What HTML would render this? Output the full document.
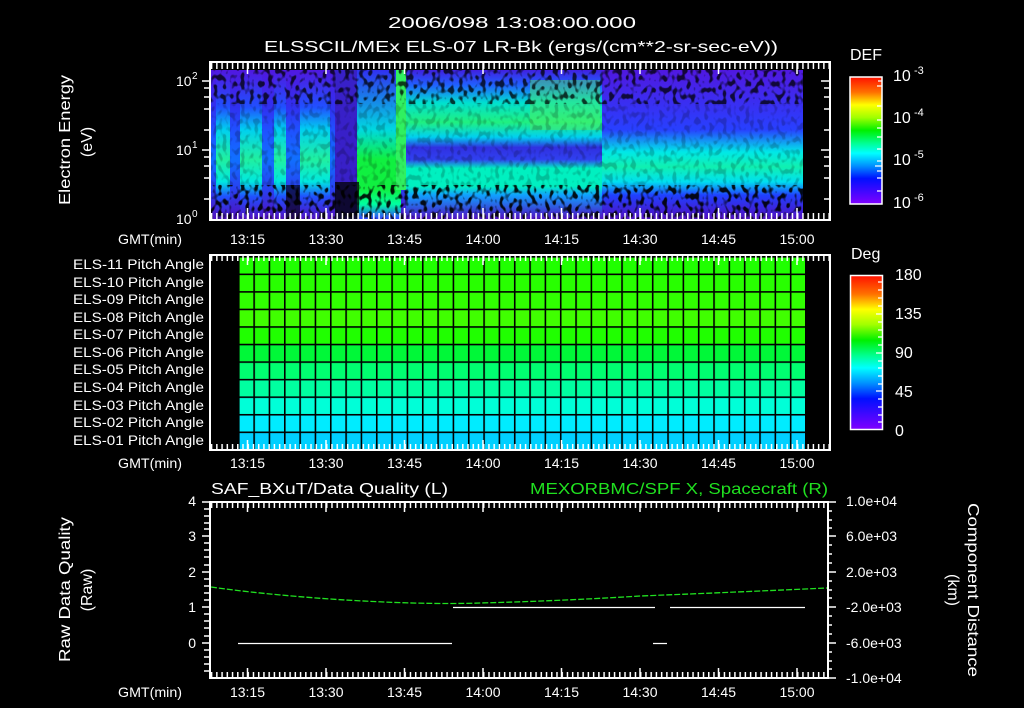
<!DOCTYPE html>
<html><head><meta charset="utf-8"><style>
html,body{margin:0;padding:0;background:#000;}
svg{display:block}
text{font-family:"Liberation Sans",sans-serif;fill:#fff;font-size:14px}
.s{font-size:13px}
</style></head><body>
<svg width="1024" height="708" viewBox="0 0 1024 708" xmlns="http://www.w3.org/2000/svg">
<defs>
<linearGradient id="cb" x1="0" y1="0" x2="0" y2="1">
<stop offset="0" stop-color="#ff1000"/><stop offset=".12" stop-color="#ff7000"/><stop offset=".22" stop-color="#ffff00"/><stop offset=".32" stop-color="#a0ff00"/><stop offset=".42" stop-color="#00f000"/><stop offset=".52" stop-color="#00ff90"/><stop offset=".6" stop-color="#00ffff"/><stop offset=".7" stop-color="#0090ff"/><stop offset=".8" stop-color="#0010ff"/><stop offset="1" stop-color="#8000ff"/>
</linearGradient>
<linearGradient id="bg" x1="0" y1="0" x2="0" y2="1">
<stop offset="0" stop-color="#5018e0"/><stop offset=".25" stop-color="#3030f0"/><stop offset=".4" stop-color="#2050ff"/><stop offset=".6" stop-color="#1070ff"/><stop offset=".8" stop-color="#2840f0"/><stop offset="1" stop-color="#5010c0"/>
</linearGradient>
<linearGradient id="st" x1="0" y1="0" x2="0" y2="1">
<stop offset="0" stop-color="#5018e0"/><stop offset=".25" stop-color="#2050ff"/><stop offset=".4" stop-color="#00d0f0"/><stop offset=".6" stop-color="#20f0a0"/><stop offset=".75" stop-color="#00e8e0"/><stop offset=".85" stop-color="#2050ff"/><stop offset="1" stop-color="#5010c0"/>
</linearGradient>
<linearGradient id="g45" x1="0" y1="0" x2="0" y2="1">
<stop offset="0" stop-color="#3030f0"/><stop offset=".4" stop-color="#00d8e0"/><stop offset=".6" stop-color="#10f040"/><stop offset=".8" stop-color="#10f040"/><stop offset=".9" stop-color="#00ffa0"/><stop offset="1" stop-color="#3040ff"/>
</linearGradient>
<linearGradient id="mid" x1="0" y1="0" x2="0" y2="1">
<stop offset="0" stop-color="#4020e0"/><stop offset=".1" stop-color="#2060ff"/><stop offset=".22" stop-color="#00e0d0"/><stop offset=".35" stop-color="#20f080"/><stop offset=".45" stop-color="#00d0f0"/><stop offset=".52" stop-color="#3030e0"/><stop offset=".6" stop-color="#3040f0"/><stop offset=".66" stop-color="#00f0c0"/><stop offset=".78" stop-color="#00f0c0"/><stop offset=".84" stop-color="#10a0ff"/><stop offset="1" stop-color="#5010c0"/>
</linearGradient>
<linearGradient id="right" x1="0" y1="0" x2="0" y2="1">
<stop offset="0" stop-color="#5018e0"/><stop offset=".4" stop-color="#2840ff"/><stop offset=".55" stop-color="#00e8e8"/><stop offset=".65" stop-color="#10f0b0"/><stop offset=".75" stop-color="#00e0f0"/><stop offset=".84" stop-color="#2040ff"/><stop offset="1" stop-color="#5010c0"/>
</linearGradient>
<filter id="n" x="0" y="0" width="1" height="1"><feTurbulence type="fractalNoise" baseFrequency="0.22 0.16" numOctaves="1" seed="4"/><feColorMatrix type="matrix" values="0 0 0 0 0  0 0 0 0 0  0 0 0 0 0  7 0 0 0 -3.5"/></filter>
<pattern id="tk" x="247.5" y="0" width="5.233" height="708" patternUnits="userSpaceOnUse"><rect x="0" y="0" width="1.5" height="708" fill="#fff"/></pattern>
<pattern id="vg" x="238" y="0" width="15.33" height="708" patternUnits="userSpaceOnUse"><rect x="0" y="0" width="1.6" height="708" fill="#000"/></pattern>
<pattern id="hg" x="0" y="256" width="1024" height="17.55" patternUnits="userSpaceOnUse"><rect x="0" y="0" width="1024" height="1.6" fill="#000"/></pattern>
</defs>

<text x="264" y="28" textLength="496" lengthAdjust="spacingAndGlyphs" style="font-size:16px;display:none"></text>
<text x="388" y="28" textLength="248" lengthAdjust="spacingAndGlyphs" style="font-size:16px">2006/098 13:08:00.000</text>
<text x="264" y="52" textLength="514" lengthAdjust="spacingAndGlyphs" style="font-size:16px">ELSSCIL/MEx ELS-07 LR-Bk  (ergs/(cm**2-sr-sec-eV))</text>

<!-- Panel 1 data -->
<rect x="211" y="70" width="592" height="149" fill="url(#bg)"/>
<rect x="216" y="70" width="14" height="149" fill="url(#st)"/>
<rect x="240" y="70" width="22" height="149" fill="url(#st)"/>
<rect x="274" y="70" width="12" height="149" fill="url(#st)"/>
<rect x="300" y="70" width="30" height="149" fill="url(#st)"/>
<rect x="335" y="70" width="22" height="149" fill="#3820c8"/>
<rect x="357" y="70" width="44" height="149" fill="url(#g45)"/>
<rect x="396" y="70" width="10" height="120" fill="#30f060"/>
<rect x="406" y="70" width="196" height="149" fill="url(#mid)"/>
<rect x="530" y="80" width="70" height="50" fill="#50f060" opacity=".45"/>
<rect x="602" y="70" width="201" height="149" fill="url(#right)"/>
<rect x="211" y="70" width="592" height="34" filter="url(#n)" opacity=".75"/>
<rect x="211" y="185" width="592" height="34" filter="url(#n)" opacity=".9"/>
<rect x="211" y="104" width="592" height="81" filter="url(#n)" opacity=".2"/>
<rect x="335" y="182" width="24" height="37" fill="#000" opacity=".75"/>
<rect x="286" y="185" width="14" height="34" fill="#000" opacity=".6"/>
<!-- Panel 1 frame -->
<rect x="210" y="62" width="620" height="158" fill="none" stroke="#fff" stroke-width="2"/>
<rect x="211" y="63" width="618" height="6" fill="url(#tk)"/>
<rect x="211" y="213" width="618" height="6" fill="url(#tk)"/>
<g stroke="#fff" stroke-width="1.5">
<path d="M247.5 63v11M326 63v11M404.5 63v11M483 63v11M561.5 63v11M640 63v11M718.5 63v11M797 63v11"/>
<path d="M247.5 219v-11M326 219v-11M404.5 219v-11M483 219v-11M561.5 219v-11M640 219v-11M718.5 219v-11M797 219v-11"/>
<path d="M202 81h8M204 88h6M204 97h6M204 109h6M204 130h6M202 150h8M204 157h6M204 166h6M204 178h6M204 199h6"/>
<path d="M830 81h-9M830 88h-6M830 97h-6M830 109h-6M830 130h-6M830 150h-9M830 157h-6M830 166h-6M830 178h-6M830 199h-6"/>
</g>
<text x="176" y="86">10</text><text x="192" y="79" style="font-size:10px">2</text>
<text x="176" y="155">10</text><text x="192" y="148" style="font-size:10px">1</text>
<text x="176" y="224">10</text><text x="192" y="217" style="font-size:10px">0</text>
<text transform="translate(70,205) rotate(-90)" textLength="130" lengthAdjust="spacingAndGlyphs" style="font-size:16px">Electron Energy</text>
<text transform="translate(92,142) rotate(-90)" text-anchor="middle" style="font-size:16px">(eV)</text>
<g text-anchor="middle">
<text x="247.5" y="244">13:15</text><text x="326" y="244">13:30</text><text x="404.5" y="244">13:45</text><text x="483" y="244">14:00</text><text x="561.5" y="244">14:15</text><text x="640" y="244">14:30</text><text x="718.5" y="244">14:45</text><text x="797" y="244">15:00</text>
</g>
<text x="118" y="244" textLength="64" lengthAdjust="spacingAndGlyphs">GMT(min)</text>

<!-- colorbar 1 -->
<text x="850" y="60" style="font-size:16px">DEF</text>
<rect x="850" y="77" width="32" height="127" fill="url(#cb)" stroke="#fff" stroke-width="1.5"/>
<g stroke="#fff" stroke-width="1.2"><path d="M882 81h-4M882 86h-5M882 106h-5M882 120h-5M882 128h-5M882 137h-5M882 149h-5M882 161h-5M882 166h-7M882 171h-5M882 178h-5M882 191h-5"/></g>
<text x="893" y="81" style="font-size:16px">10</text><text x="914" y="74" style="font-size:11px">-3</text>
<text x="893" y="123" style="font-size:16px">10</text><text x="914" y="116" style="font-size:11px">-4</text>
<text x="893" y="165" style="font-size:16px">10</text><text x="914" y="158" style="font-size:11px">-5</text>
<text x="893" y="208" style="font-size:16px">10</text><text x="914" y="201" style="font-size:11px">-6</text>

<!-- Panel 2 -->
<rect x="238" y="256" width="567" height="18" fill="#20ff00"/>
<rect x="238" y="273.5" width="567" height="18" fill="#28ff00"/>
<rect x="238" y="291" width="567" height="18" fill="#30ff00"/>
<rect x="238" y="308.6" width="567" height="18" fill="#40ff00"/>
<rect x="238" y="326" width="567" height="18" fill="#20ff00"/>
<rect x="238" y="343.7" width="567" height="18" fill="#00f838"/>
<rect x="238" y="361.3" width="567" height="18" fill="#00ff70"/>
<rect x="238" y="378.8" width="567" height="18" fill="#00ffa0"/>
<rect x="238" y="396.4" width="567" height="18" fill="#00ffd8"/>
<rect x="238" y="414" width="567" height="18" fill="#00ecff"/>
<rect x="238" y="431.5" width="567" height="18" fill="#00d0ff"/>
<rect x="238" y="256" width="567" height="193" fill="url(#vg)"/>
<rect x="238" y="256" width="567" height="193" fill="url(#hg)"/>
<rect x="210" y="255" width="620" height="195" fill="none" stroke="#fff" stroke-width="2"/>
<rect x="211" y="256" width="618" height="5" fill="url(#tk)"/>
<rect x="211" y="444" width="618" height="5" fill="url(#tk)"/>
<g stroke="#fff" stroke-width="1.5">
<path d="M247.5 256v9M326 256v9M404.5 256v9M483 256v9M561.5 256v9M640 256v9M718.5 256v9M797 256v9"/>
<path d="M247.5 449v-9M326 449v-9M404.5 449v-9M483 449v-9M561.5 449v-9M640 449v-9M718.5 449v-9M797 449v-9"/>
</g>
<g class="s">
<text x="73" y="269" textLength="131" lengthAdjust="spacingAndGlyphs">ELS-11 Pitch Angle</text>
<text x="73" y="287" textLength="131" lengthAdjust="spacingAndGlyphs">ELS-10 Pitch Angle</text>
<text x="73" y="304" textLength="131" lengthAdjust="spacingAndGlyphs">ELS-09 Pitch Angle</text>
<text x="73" y="322" textLength="131" lengthAdjust="spacingAndGlyphs">ELS-08 Pitch Angle</text>
<text x="73" y="339" textLength="131" lengthAdjust="spacingAndGlyphs">ELS-07 Pitch Angle</text>
<text x="73" y="357" textLength="131" lengthAdjust="spacingAndGlyphs">ELS-06 Pitch Angle</text>
<text x="73" y="374" textLength="131" lengthAdjust="spacingAndGlyphs">ELS-05 Pitch Angle</text>
<text x="73" y="392" textLength="131" lengthAdjust="spacingAndGlyphs">ELS-04 Pitch Angle</text>
<text x="73" y="410" textLength="131" lengthAdjust="spacingAndGlyphs">ELS-03 Pitch Angle</text>
<text x="73" y="427" textLength="131" lengthAdjust="spacingAndGlyphs">ELS-02 Pitch Angle</text>
<text x="73" y="445" textLength="131" lengthAdjust="spacingAndGlyphs">ELS-01 Pitch Angle</text>
</g>
<g text-anchor="middle">
<text x="247.5" y="468">13:15</text><text x="326" y="468">13:30</text><text x="404.5" y="468">13:45</text><text x="483" y="468">14:00</text><text x="561.5" y="468">14:15</text><text x="640" y="468">14:30</text><text x="718.5" y="468">14:45</text><text x="797" y="468">15:00</text>
</g>
<text x="118" y="468" textLength="64" lengthAdjust="spacingAndGlyphs">GMT(min)</text>

<!-- colorbar 2 -->
<text x="851" y="259" style="font-size:16px">Deg</text>
<rect x="850.5" y="275.5" width="32" height="154" fill="url(#cb)" stroke="#fff" stroke-width="1.5"/>
<g stroke="#fff" stroke-width="1.2"><path d="M882 282h-4M882 290h-4M882 298h-4M882 306h-4M882 314h-6M882 322h-4M882 330h-4M882 337h-4M882 345h-4M882 353h-6M882 361h-4M882 368h-4M882 376h-4M882 384h-4M882 391h-6M882 399h-4M882 407h-4M882 415h-4M882 422h-4"/></g>
<text x="895" y="280" style="font-size:16px">180</text><text x="895" y="319" style="font-size:16px">135</text><text x="895" y="358" style="font-size:16px">90</text><text x="895" y="397" style="font-size:16px">45</text><text x="895" y="436" style="font-size:16px">0</text>

<!-- Panel 3 -->
<text x="211" y="494" textLength="237" lengthAdjust="spacingAndGlyphs" style="font-size:16px">SAF_BXuT/Data Quality (L)</text>
<text x="530" y="494" textLength="298" lengthAdjust="spacingAndGlyphs" style="font-size:16px;fill:#20e020">MEXORBMC/SPF X, Spacecraft (R)</text>
<rect x="210" y="502" width="618" height="176" fill="none" stroke="#fff" stroke-width="2"/>
<rect x="211" y="503" width="616" height="5" fill="url(#tk)"/>
<rect x="211" y="672" width="616" height="5" fill="url(#tk)"/>
<g stroke="#fff" stroke-width="1.5">
<path d="M247.5 503v9M326 503v9M404.5 503v9M483 503v9M561.5 503v9M640 503v9M718.5 503v9M797 503v9"/>
<path d="M247.5 677v-9M326 677v-9M404.5 677v-9M483 677v-9M561.5 677v-9M640 677v-9M718.5 677v-9M797 677v-9"/>
<path d="M202 502h8M202 536h8M202 572h8M202 607h8M202 643h8M204 509h6M204 516h6M204 523h6M204 529h6M204 543h6M204 550h6M204 557h6M204 565h6M204 579h6M204 586h6M204 593h6M204 600h6M204 614h6M204 621h6M204 628h6M204 636h6M204 650h6M204 657h6M204 664h6M204 671h6"/>
<path d="M828 502h8M828 536h8M828 572h8M828 607h8M828 643h8M828 678h8M828 511h4M828 520h4M828 528h4M828 545h4M828 554h4M828 563h4M828 581h4M828 590h4M828 598h4M828 616h4M828 625h4M828 634h4M828 652h4M828 661h4M828 669h4"/>
</g>
<path d="M211 587 Q260 594 330 599 Q420 605 480 603 Q560 601 640 596 Q740 592 827 588" fill="none" stroke="#20e020" stroke-width="1.3" stroke-dasharray="6 2"/>
<g stroke="#fff" stroke-width="1.3">
<path d="M238 643.5h214M653 643.5h14M453 607.5h202M670 607.5h135"/>
</g>
<g text-anchor="end" style="font-size:14px">
<text x="196" y="506">4</text><text x="196" y="541">3</text><text x="196" y="577">2</text><text x="196" y="612">1</text><text x="196" y="648">0</text>
</g>
<g class="s">
<text x="846" y="506">1.0e+04</text><text x="846" y="541">6.0e+03</text><text x="846" y="577">2.0e+03</text><text x="846" y="612">-2.0e+03</text><text x="846" y="648">-6.0e+03</text><text x="846" y="683">-1.0e+04</text>
</g>
<text transform="translate(70,662) rotate(-90)" textLength="145" lengthAdjust="spacingAndGlyphs" style="font-size:16px">Raw Data Quality</text>
<text transform="translate(92,590) rotate(-90)" text-anchor="middle" style="font-size:16px">(Raw)</text>
<text transform="translate(968,503) rotate(90)" textLength="174" lengthAdjust="spacingAndGlyphs" style="font-size:16px">Component Distance</text>
<text transform="translate(948,590) rotate(90)" text-anchor="middle" style="font-size:16px">(km)</text>
<g text-anchor="middle">
<text x="247.5" y="697">13:15</text><text x="326" y="697">13:30</text><text x="404.5" y="697">13:45</text><text x="483" y="697">14:00</text><text x="561.5" y="697">14:15</text><text x="640" y="697">14:30</text><text x="718.5" y="697">14:45</text><text x="797" y="697">15:00</text>
</g>
<text x="118" y="697" textLength="64" lengthAdjust="spacingAndGlyphs">GMT(min)</text>
</svg>
</body></html>
